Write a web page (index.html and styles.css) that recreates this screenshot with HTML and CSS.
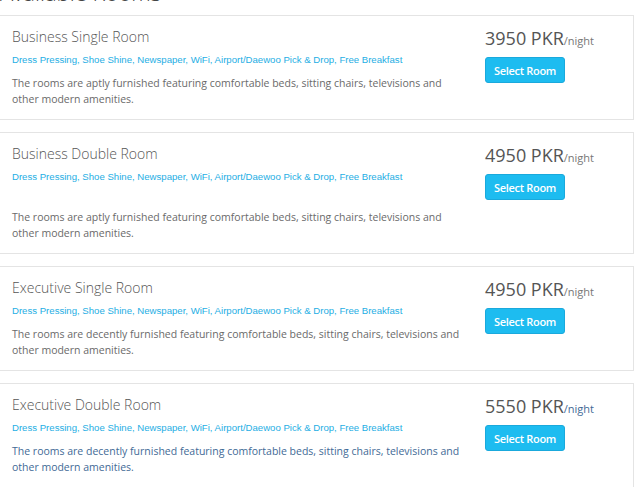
FILE: index.html
```html
<!DOCTYPE html>
<html>
<head>
<meta charset="utf-8">
<link rel="stylesheet" href="styles.css">
</head>
<body>
<div class="page">
  <h2 class="heading">Available Rooms</h2>
  <div class="room">
    <div class="info">
      <div class="title">Business Single Room</div>
      <div class="amen">Dress Pressing, Shoe Shine, Newspaper, WiFi, Airport/Daewoo Pick &amp; Drop, Free Breakfast</div>
      <p class="desc">The rooms are aptly furnished featuring comfortable beds, sitting chairs, televisions and other modern amenities.</p>
    </div>
    <div class="side">
      <div class="price">3950 PKR<span class="night">/night</span></div>
      <button class="btn">Select Room</button>
    </div>
  </div>
  <div class="room">
    <div class="info">
      <div class="title">Business Double Room</div>
      <div class="amen">Dress Pressing, Shoe Shine, Newspaper, WiFi, Airport/Daewoo Pick &amp; Drop, Free Breakfast</div>
      <div class="spacer"></div>
      <p class="desc">The rooms are aptly furnished featuring comfortable beds, sitting chairs, televisions and other modern amenities.</p>
    </div>
    <div class="side">
      <div class="price">4950 PKR<span class="night">/night</span></div>
      <button class="btn">Select Room</button>
    </div>
  </div>
  <div class="room">
    <div class="info">
      <div class="title">Executive Single Room</div>
      <div class="amen">Dress Pressing, Shoe Shine, Newspaper, WiFi, Airport/Daewoo Pick &amp; Drop, Free Breakfast</div>
      <p class="desc">The rooms are decently furnished featuring comfortable beds, sitting chairs, televisions and other modern amenities.</p>
    </div>
    <div class="side">
      <div class="price">4950 PKR<span class="night">/night</span></div>
      <button class="btn">Select Room</button>
    </div>
  </div>
  <div class="room hover">
    <div class="info">
      <div class="title">Executive Double Room</div>
      <div class="amen">Dress Pressing, Shoe Shine, Newspaper, WiFi, Airport/Daewoo Pick &amp; Drop, Free Breakfast</div>
      <p class="desc">The rooms are decently furnished featuring comfortable beds, sitting chairs, televisions and other modern amenities.</p>
    </div>
    <div class="side">
      <div class="price">5550 PKR<span class="night">/night</span></div>
      <button class="btn">Select Room</button>
    </div>
  </div>
</div>
</body>
</html>
```
FILE: styles.css
```css
html, body {
  margin: 0;
  padding: 0;
  background: #fff;
}
body {
  font-family: "Open Sans", "Liberation Sans", sans-serif;
  color: #555;
}
.page {
  margin-left: -8px;
  width: 642px;
  display: flex;
  flex-direction: column;
  gap: 12px;
}
.heading {
  font-weight: 300;
  font-size: 22px;
  line-height: 24px;
  margin: -20px 0 -1px 8px;
  color: #444;
}
.room {
  border: 1px solid #e4e4e4;
  padding: 11px 12px 12px 19px;
  display: flex;
  background: #fff;
}
.info {
  width: 473px;
}
.title {
  font-size: 14px;
  line-height: 20px;
  font-weight: 300;
  color: #555;
}
.amen {
  font-family: "Liberation Sans", Arial, sans-serif;
  font-size: 9.6px;
  line-height: 14px;
  margin-top: 6px;
  color: #1eaee4;
}
.spacer {
  height: 17px;
}
.desc {
  margin: 8px 0 0;
  font-size: 10.5px;
  line-height: 16px;
  color: #6a6a6a;
  width: 455px;
}
.side {
  padding-top: 0;
}
.price {
  font-size: 18px;
  line-height: 22px;
  color: #555;
}
.night {
  font-size: 11px;
  color: #777;
}
.btn {
  margin-top: 5px;
  width: 80px;
  height: 26px;
  border: 1px solid #1aa9dc;
  border-radius: 3px;
  background: #1dbcf0;
  color: #fff;
  font-family: "Open Sans", sans-serif;
  font-size: 11px;
  font-weight: 600;
  letter-spacing: -0.3px;
  padding: 0;
}
.hover .desc {
  color: #3f6a96;
}
.hover .night {
  color: #3f6a96;
}
```
